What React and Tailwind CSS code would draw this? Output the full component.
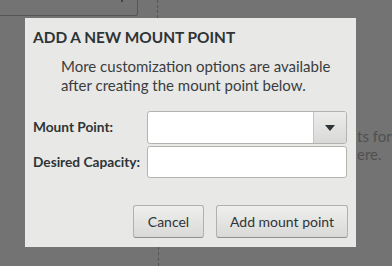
import React from 'react';

const font = { fontFamily: 'Lato, "Noto Sans", sans-serif' };

function Backdrop() {
  return (
    <div className="absolute inset-0 bg-[#737373]">
      <div className="absolute left-0 top-0 w-[138px] h-[16px] border-r border-b border-[#555] rounded-br-[3px]" />
      <div className="absolute left-[121px] top-0 w-[2px] h-[2px] bg-[#444]" />
      <div className="absolute left-[157px] top-0 h-[18px] border-l border-dashed border-[#555]" />
      <div className="absolute left-[158px] top-[247px] h-[19px] border-l border-dashed border-[#555]" />
      <div className="absolute left-[357px] top-[127px] text-[15px] leading-[18px] text-[#505050] whitespace-nowrap">
        <div>ts for</div>
        <div>ere.</div>
      </div>
    </div>
  );
}

function Field({ label, children }) {
  return (
    <div className="flex items-center">
      <div className="w-[114px] text-[13.7px] font-bold text-[#2e3436] whitespace-nowrap">{label}</div>
      {children}
    </div>
  );
}

export default function App() {
  return (
    <div className="relative w-[392px] h-[266px] overflow-hidden" style={font}>
      <Backdrop />
      <div className="absolute left-[25px] top-[18px] w-[331px] h-[229px] bg-[#e8e8e7] flex flex-col px-[8px] text-[#2e3436]">
        <h1 className="mt-[9px] text-[15.4px] font-bold leading-[20px] whitespace-nowrap">ADD A NEW MOUNT POINT</h1>
        <p className="mt-[10px] ml-[28px] text-[15px] leading-[19px] text-[#3a3d3e] whitespace-nowrap">
          More customization options are available<br />after creating the mount point below.
        </p>
        <div className="mt-[16px] flex flex-col gap-[2px]">
          <Field label="Mount Point:">
            <div className="flex w-[200px] h-[33px] rounded-[3px] border border-[#b3b3b0] bg-white overflow-hidden">
              <div className="flex-1" />
              <div className="w-[33px] border-l border-[#c4c4c1] bg-gradient-to-b from-[#ececeb] to-[#d9d9d7] flex items-center justify-center">
                <svg width="10" height="6" viewBox="0 0 10 6"><path d="M0 0h10L5 6z" fill="#2e3436" /></svg>
              </div>
            </div>
          </Field>
          <Field label="Desired Capacity:">
            <div className="w-[200px] h-[32px] rounded-[3px] border border-[#b3b3b0] bg-white" />
          </Field>
        </div>
        <div className="mt-auto mb-[9px] flex justify-end gap-[12px]">
          <button className="w-[71px] h-[33px] rounded-[3px] border border-[#b0b0ad] border-b-[#8f8f8c] bg-gradient-to-b from-[#efefee] to-[#d9d9d7] text-[14px] text-[#2e3436] whitespace-nowrap">Cancel</button>
          <button className="w-[132px] h-[33px] rounded-[3px] border border-[#b0b0ad] border-b-[#8f8f8c] bg-gradient-to-b from-[#efefee] to-[#d9d9d7] text-[14px] text-[#2e3436] whitespace-nowrap">Add mount point</button>
        </div>
      </div>
    </div>
  );
}
